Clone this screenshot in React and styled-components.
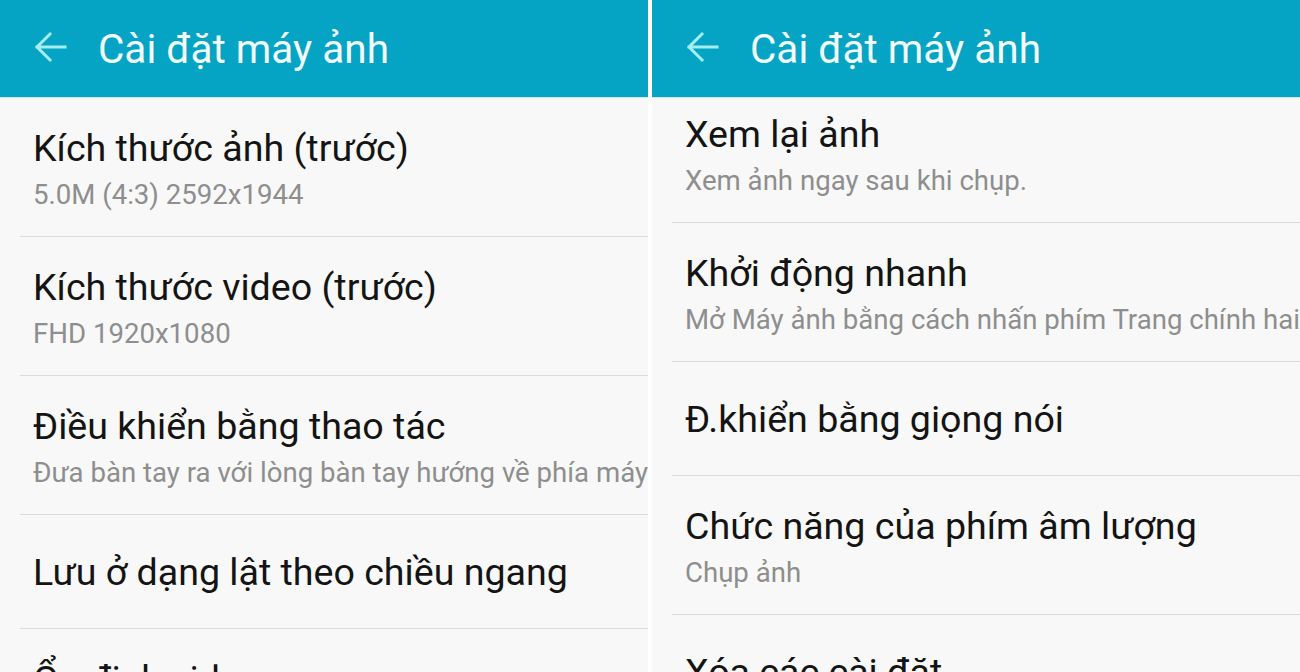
import React from "react";
import styled, { createGlobalStyle } from "styled-components";

const Global = createGlobalStyle`
  html, body { margin: 0; padding: 0; background: #ffffff; }
  body { font-family: Roboto, "Noto Sans", "Liberation Sans", sans-serif; }
  * { box-sizing: border-box; }
`;

const Screen = styled.div`
  width: 1300px;
  height: 672px;
  display: flex;
  gap: 4px;
  background: #ffffff;
  overflow: hidden;
`;

const Panel = styled.section`
  flex: 1 1 0;
  height: 672px;
  display: flex;
  flex-direction: column;
  background: #f8f8f8;
  overflow: hidden;
  position: relative;
`;

const AppBar = styled.header`
  height: 98px;
  flex: 0 0 auto;
  display: flex;
  align-items: center;
  gap: 31px;
  padding: 0 0 0 33px;
  background: #05a4c4;
  border-bottom: 1px solid #cde9f0;
  position: relative;
  z-index: 2;
`;

const Back = styled.svg`
  width: 34px;
  height: 32px;
  flex: 0 0 auto;
  margin-top: -3px;
`;

const AppTitle = styled.h1`
  margin: 0;
  font-weight: 400;
  font-size: 40.5px;
  color: #f2fcff;
  white-space: nowrap;
`;

const List = styled.div`
  display: flex;
  flex-direction: column;
  margin-top: ${(p) => p.$offset || 0}px;
`;

const Row = styled.div`
  padding: ${(p) => (p.$single ? "35px 0 34px 13px" : "28px 0 23px 13px")};
  margin-left: 20px;
  border-bottom: 1px solid #dcdcdc;
  white-space: nowrap;
`;

const Title = styled.div`
  font-size: 37.6px;
  line-height: 44px;
  color: #141414;
`;

const Sub = styled.div`
  margin-top: 7px;
  font-size: 27.6px;
  line-height: 36px;
  color: #8e8e8e;
`;

const BackIcon = () => (
  <Back viewBox="0 0 34 32" fill="none">
    <path d="M32 16H4M17 3L4 16l13 13" stroke="#a4eef2" strokeWidth="3" strokeLinecap="square" />
  </Back>
);

const Item = ({ title, sub }) => (
  <Row $single={!sub}>
    <Title>{title}</Title>
    {sub && <Sub>{sub}</Sub>}
  </Row>
);

const left = [
  { title: "Kích thước ảnh (trước)", sub: "5.0M (4:3) 2592x1944" },
  { title: "Kích thước video (trước)", sub: "FHD 1920x1080" },
  { title: "Điều khiển bằng thao tác", sub: "Đưa bàn tay ra với lòng bàn tay hướng về phía máy ảnh để chụp ảnh." },
  { title: "Lưu ở dạng lật theo chiều ngang" },
  { title: "Ổn định video", sub: "Bật" },
];

const right = [
  { title: "Xem lại ảnh", sub: "Xem ảnh ngay sau khi chụp." },
  { title: "Khởi động nhanh", sub: "Mở Máy ảnh bằng cách nhấn phím Trang chính hai lần nhanh chóng." },
  { title: "Đ.khiển bằng giọng nói" },
  { title: "Chức năng của phím âm lượng", sub: "Chụp ảnh" },
  { title: "Xóa các cài đặt" },
];

const SettingsScreen = ({ items, offset }) => (
  <Panel>
    <AppBar>
      <BackIcon />
      <AppTitle>Cài đặt máy ảnh</AppTitle>
    </AppBar>
    <List $offset={offset}>
      {items.map((it) => (
        <Item key={it.title} {...it} />
      ))}
    </List>
  </Panel>
);

export default function App() {
  return (
    <>
      <Global />
      <Screen>
        <SettingsScreen items={left} offset={0} />
        <SettingsScreen items={right} offset={-14} />
      </Screen>
    </>
  );
}
